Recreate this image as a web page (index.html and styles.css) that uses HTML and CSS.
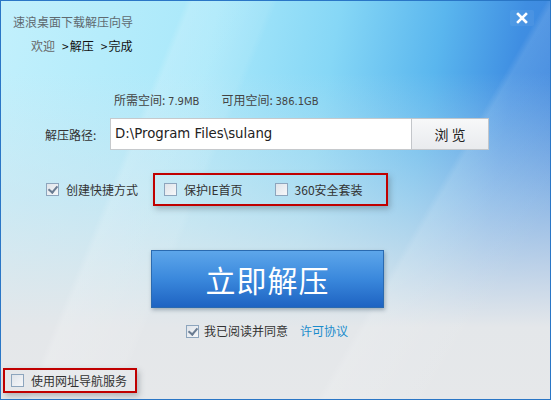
FILE: index.html
```html
<!DOCTYPE html>
<html>
<head>
    <meta charset="UTF-8">
    <title>速浪桌面下载解压向导</title>
    <link rel="stylesheet" href="styles.css">
</head>
<body>
<div class="win">
    <a class="close" href="javascript:;"><svg width="12" height="12" viewBox="0 0 12 12"><path d="M2 2L10 10M10 2L2 10" stroke="#fff" stroke-width="2.6" stroke-linecap="square"/></svg></a>
    <div class="title">速浪桌面下载解压向导</div>
    <div class="crumbs"><span class="done">欢迎</span><span class="sep">&gt;</span>解压<span class="sep">&gt;</span>完成</div>
    <div class="space">
        <span>所需空间: <em>7.9MB</em></span>
        <span>可用空间: <em>386.1GB</em></span>
    </div>
    <div class="path">
        <label>解压路径:</label>
        <div class="input">D:\Program Files\sulang</div>
        <a class="browse" href="javascript:;">浏 览</a>
    </div>
    <div class="opts">
        <label class="chk"><i class="box on"></i>创建快捷方式</label>
        <div class="mark">
            <label class="chk"><i class="box"></i>保护IE首页</label>
            <label class="chk"><i class="box"></i>360安全套装</label>
        </div>
    </div>
    <a class="go" href="javascript:;">立即解压</a>
    <div class="agree">
        <label class="chk"><i class="box on"></i>我已阅读并同意</label>
        <a href="javascript:;">许可协议</a>
    </div>
    <div class="foot">
        <label class="chk"><i class="box"></i>使用网址导航服务</label>
    </div>
</div>
</body>
</html>
```
FILE: styles.css
```css
*{margin:0;padding:0;box-sizing:border-box;}
body{width:551px;height:400px;overflow:hidden;font-family:"Noto Sans CJK SC","DejaVu Sans",sans-serif;font-size:12px;color:#333;}
a{text-decoration:none;}
em{font-style:normal;font-family:"DejaVu Sans",sans-serif;font-size:10px;}
.win{position:relative;width:551px;height:400px;border:1px solid #2a76c6;display:flex;flex-direction:column;overflow:hidden;
    background:linear-gradient(112deg,rgba(255,255,255,0) 26%,rgba(255,255,255,.16) 27%,rgba(255,255,255,.07) 38%,rgba(255,255,255,0) 39%),
    linear-gradient(120deg,rgba(255,255,255,0) 70%,rgba(255,255,255,.12) 71%,rgba(255,255,255,0) 86%),
    linear-gradient(180deg,rgba(229,232,235,0) 18%,rgba(214,229,238,.55) 50%,#e4e7ea 82%,#e6e8ea 100%),
    linear-gradient(100deg,#c2f0fc 0%,#a9e8fa 35%,#86d7f6 55%,#5ab6ee 72%,#3f8ee2 85%,#3c7fd9 100%);}
.close{position:absolute;right:16px;top:9px;width:24px;height:16px;display:flex;align-items:center;justify-content:center;background:rgba(255,255,255,.06);border-radius:2px;}
.title{padding:13px 0 0 12px;line-height:16px;color:#5f6a70;}
.crumbs{padding:8px 0 0 30px;line-height:16px;color:#111;}
.crumbs .done{color:#666;}
.crumbs .sep{margin:0 1px 0 7px;}
.space{padding:39px 0 0 113px;line-height:14px;color:#444;display:flex;gap:22px;}
.path{display:flex;align-items:center;margin-top:9px;padding-left:44px;height:32px;}
.path label{width:65px;color:#333;}
.input{width:301px;height:32px;background:#fff;border:1px solid #c6c9cc;border-right:0;padding-left:4px;line-height:30px;font-family:"DejaVu Sans",sans-serif;font-size:13.3px;color:#222;}
.browse{width:78px;height:32px;border:1px solid #c3c6ca;background:linear-gradient(#f7f8f9,#e9ebee);text-align:center;line-height:30px;font-size:14px;color:#222;}
.opts{display:flex;align-items:center;margin-top:23px;padding-left:45px;height:33px;}
.chk{display:flex;align-items:center;color:#333;white-space:nowrap;}
.box{display:inline-block;width:13px;height:13px;border:1px solid #8da5bd;background:linear-gradient(135deg,#dfe4ea,#f6f7f9);margin-right:7px;position:relative;}
.box.on:after{content:'';position:absolute;left:3px;top:0;width:4px;height:7px;border:solid #6a7c92;border-width:0 2px 2px 0;transform:rotate(40deg);}
.mark{display:flex;align-items:center;margin-left:15px;width:235px;height:33px;border:2px solid #c00000;box-shadow:2px 3px 6px rgba(70,80,90,.35);padding-left:9px;}
.mark .chk+.chk{margin-left:32px;}
.go{display:block;width:233px;height:58px;margin:44px 0 0 150px;border:1px solid #2a6ab0;background:linear-gradient(#5da6ea,#3a88dc 50%,#1e63c2);box-shadow:1px 2px 4px rgba(60,80,100,.4);color:#fff;font-size:30px;line-height:56px;text-align:center;letter-spacing:1px;}
.agree{display:flex;align-items:center;margin:15px 0 0 185px;line-height:16px;}
.agree .box{margin-right:5px;}
.agree a{margin-left:12px;color:#1a8ccc;}
.foot{margin-top:auto;margin-bottom:6px;margin-left:2px;width:134px;height:25px;border:2px solid #c00000;box-shadow:2px 3px 6px rgba(70,80,90,.35);display:flex;align-items:center;padding-left:6px;}
```
